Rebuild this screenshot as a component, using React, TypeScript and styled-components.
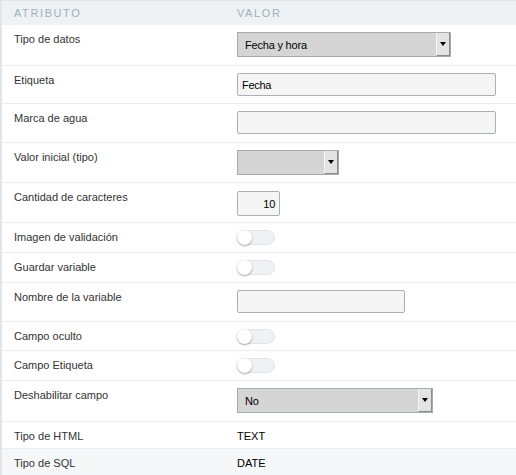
import React from 'react';
import styled, { createGlobalStyle } from 'styled-components';

const GlobalStyle = createGlobalStyle`
  html, body {
    margin: 0;
    padding: 0;
    background: #ffffff;
    font-family: "Liberation Sans", Arial, sans-serif;
  }
`;

const Table = styled.div`
  width: 516px;
  border-left: 2px solid #dfe5ea;
  border-top: 1px solid #dfe5ea;
  box-sizing: border-box;
`;

const Row = styled.div<{ $h: number; $alt?: boolean }>`
  display: grid;
  grid-template-columns: 235px 1fr;
  height: ${(p) => p.$h}px;
  box-sizing: border-box;
  border-bottom: 1px solid #e9edf0;
  background: ${(p) => (p.$alt ? '#f5f7f9' : '#ffffff')};
`;

const HeadRow = styled.div`
  display: grid;
  grid-template-columns: 235px 1fr;
  height: 24px;
  align-items: center;
  background: #eef2f5;
`;

const HeadCell = styled.div<{ $first?: boolean }>`
  padding-left: ${(p) => (p.$first ? 12 : 0)}px;
  font-size: 11px;
  letter-spacing: 1.6px;
  text-transform: uppercase;
  color: #a2b0bb;
`;

const Label = styled.div`
  padding: 7px 0 0 12px;
  font-size: 11px;
  line-height: 14px;
  color: #333333;
`;

const Value = styled.div<{ $pt?: number }>`
  padding-top: ${(p) => p.$pt ?? 7}px;
`;

const PlainValue = styled.div`
  padding-top: 7px;
  font-size: 11px;
  line-height: 14px;
  color: #000000;
`;

const SelectBox = styled.div<{ $w: number }>`
  width: ${(p) => p.$w}px;
  height: 25px;
  box-sizing: border-box;
  border: 1px solid #a6abb0;
  background: #d5d5d5;
  display: flex;
  align-items: center;
  justify-content: space-between;
  font-size: 11px;
  letter-spacing: -0.2px;
  color: #000;
`;

const SelectText = styled.span`
  padding-left: 7px;
`;

const ArrowBox = styled.div`
  width: 14px;
  height: 100%;
  box-sizing: border-box;
  background: #e3e3e3;
  border-left: 1px solid #f4f4f4;
  border-right: 1px solid #8c8c8c;
  border-bottom: 1px solid #8c8c8c;
  display: flex;
  align-items: center;
  justify-content: center;
`;

const Arrow = styled.span`
  width: 0;
  height: 0;
  border-left: 3px solid transparent;
  border-right: 3px solid transparent;
  border-top: 4px solid #000;
`;

const TextInput = styled.div<{ $w: number; $right?: boolean; $h?: number }>`
  width: ${(p) => p.$w}px;
  height: ${(p) => p.$h ?? 23}px;
  box-sizing: border-box;
  border: 1px solid #a9b0b7;
  border-radius: 2px;
  background: #f5f5f5;
  display: flex;
  align-items: center;
  justify-content: ${(p) => (p.$right ? 'flex-end' : 'flex-start')};
  padding: 0 4px;
  font-size: 11px;
  letter-spacing: -0.3px;
  color: #000;
`;

const Toggle = styled.div`
  position: relative;
  width: 38px;
  height: 15px;
  box-sizing: border-box;
  border: 1px solid #dfe5ea;
  border-radius: 8px;
  background: #eef2f5;
`;

const Knob = styled.span`
  position: absolute;
  left: -1px;
  top: -1px;
  width: 15px;
  height: 15px;
  border-radius: 50%;
  background: #ffffff;
  box-shadow: 0 1px 2px rgba(0, 0, 0, 0.35);
`;

const Select = ({ w, text }: { w: number; text?: string }) => (
  <SelectBox $w={w}>
    <SelectText>{text}</SelectText>
    <ArrowBox>
      <Arrow />
    </ArrowBox>
  </SelectBox>
);

const Switch = () => (
  <Toggle>
    <Knob />
  </Toggle>
);

export default function App() {
  return (
    <>
      <GlobalStyle />
      <Table>
        <HeadRow>
          <HeadCell $first>Atributo</HeadCell>
          <HeadCell>Valor</HeadCell>
        </HeadRow>

        <Row $h={41}>
          <Label>Tipo de datos</Label>
          <Value>
            <Select w={214} text="Fecha y hora" />
          </Value>
        </Row>

        <Row $h={38}>
          <Label>Etiqueta</Label>
          <Value>
            <TextInput $w={259}>Fecha</TextInput>
          </Value>
        </Row>

        <Row $h={39}>
          <Label>Marca de agua</Label>
          <Value>
            <TextInput $w={259} />
          </Value>
        </Row>

        <Row $h={40}>
          <Label>Valor inicial (tipo)</Label>
          <Value>
            <Select w={102} />
          </Value>
        </Row>

        <Row $h={40}>
          <Label>Cantidad de caracteres</Label>
          <Value $pt={8}>
            <TextInput $w={43} $h={25} $right>
              10
            </TextInput>
          </Value>
        </Row>

        <Row $h={30}>
          <Label>Imagen de validación</Label>
          <Value>
            <Switch />
          </Value>
        </Row>

        <Row $h={30}>
          <Label>Guardar variable</Label>
          <Value>
            <Switch />
          </Value>
        </Row>

        <Row $h={39}>
          <Label>Nombre de la variable</Label>
          <Value>
            <TextInput $w={168} />
          </Value>
        </Row>

        <Row $h={29}>
          <Label>Campo oculto</Label>
          <Value>
            <Switch />
          </Value>
        </Row>

        <Row $h={30}>
          <Label>Campo Etiqueta</Label>
          <Value>
            <Switch />
          </Value>
        </Row>

        <Row $h={41}>
          <Label>Deshabilitar campo</Label>
          <Value>
            <Select w={196} text="No" />
          </Value>
        </Row>

        <Row $h={27}>
          <Label>Tipo de HTML</Label>
          <PlainValue>TEXT</PlainValue>
        </Row>

        <Row $h={27} $alt>
          <Label>Tipo de SQL</Label>
          <PlainValue>DATE</PlainValue>
        </Row>
      </Table>
    </>
  );
}
